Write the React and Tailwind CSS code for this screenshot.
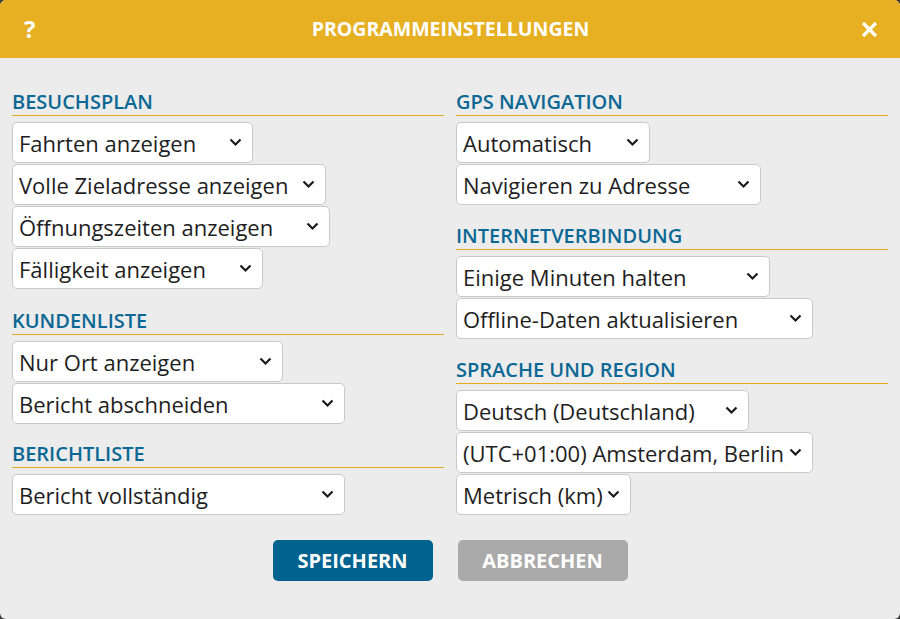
import { useState } from "react";

const font = { fontFamily: '"Open Sans", "Noto Sans", sans-serif' };

function Chevron() {
  return (
    <svg width="13" height="9" viewBox="0 0 13 9" className="shrink-0">
      <path d="M1.5 1.5 L6.5 6.5 L11.5 1.5" fill="none" stroke="#1a1a1a" strokeWidth="2.2" />
    </svg>
  );
}

function Select({ value, w }) {
  return (
    <div
      className={`flex items-center h-[41px] bg-white border border-[#c9c9c9] rounded-[5px] pl-[6px] pr-[10px] ${w}`}
    >
      <span className="flex-1 overflow-hidden whitespace-nowrap text-[22px] leading-[30px] text-[#1e1e1e]">{value}</span>
      <span className="pl-[4px]">
        <Chevron />
      </span>
    </div>
  );
}

function Section({ title, items, gap }) {
  return (
    <div className={gap}>
      <h3 className="text-[20px] leading-[26px] font-semibold text-[#0b6894] border-b border-[#e5ab1c] mb-[6px]">
        {title}
      </h3>
      <div className="flex flex-col gap-[1px]">
        {items.map((it) => (
          <Select key={it.v} value={it.v} w={it.w} />
        ))}
      </div>
    </div>
  );
}

export default function App() {
  const [open] = useState(true);

  const left = [
    {
      title: "BESUCHSPLAN",
      gap: "",
      items: [
        { v: "Fahrten anzeigen", w: "w-[241px]" },
        { v: "Volle Zieladresse anzeigen", w: "w-[314px]" },
        { v: "Öffnungszeiten anzeigen", w: "w-[318px]" },
        { v: "Fälligkeit anzeigen", w: "w-[251px]" },
      ],
    },
    {
      title: "KUNDENLISTE",
      gap: "mt-[19px]",
      items: [
        { v: "Nur Ort anzeigen", w: "w-[271px]" },
        { v: "Bericht abschneiden", w: "w-[333px]" },
      ],
    },
    {
      title: "BERICHTLISTE",
      gap: "mt-[17px]",
      items: [{ v: "Bericht vollständig", w: "w-[333px]" }],
    },
  ];

  const right = [
    {
      title: "GPS NAVIGATION",
      gap: "",
      items: [
        { v: "Automatisch", w: "w-[194px]" },
        { v: "Navigieren zu Adresse", w: "w-[305px]" },
      ],
    },
    {
      title: "INTERNETVERBINDUNG",
      gap: "mt-[18px]",
      items: [
        { v: "Einige Minuten halten", w: "w-[314px]" },
        { v: "Offline-Daten aktualisieren", w: "w-[357px]" },
      ],
    },
    {
      title: "SPRACHE UND REGION",
      gap: "mt-[18px]",
      items: [
        { v: "Deutsch (Deutschland)", w: "w-[293px]" },
        { v: "(UTC+01:00) Amsterdam, Berlin,", w: "w-[357px]" },
        { v: "Metrisch (km)", w: "w-[175px]" },
      ],
    },
  ];

  if (!open) return null;

  return (
    <div className="w-[900px] h-[619px] bg-[#3b3b3b]" style={font}>
      <div className="w-full h-full bg-[#ececec] rounded-[6px] overflow-hidden flex flex-col">
        {/* Title bar */}
        <div className="h-[58px] bg-[#e6b022] flex items-center pl-[24px] pr-[22px] text-white">
          <span className="w-[16px] text-[24px] leading-[30px] font-bold">?</span>
          <span className="flex-1 text-center text-[19.5px] font-bold">PROGRAMMEINSTELLUNGEN</span>
          <svg width="17" height="17" viewBox="0 0 17 17">
            <path d="M2 2 L15 15 M15 2 L2 15" stroke="#fff" strokeWidth="3.2" />
          </svg>
        </div>

        {/* Content */}
        <div className="flex gap-[12px] pl-[12px] pr-[12px] pt-[31px]">
          <div className="w-[432px]">
            {left.map((s) => (
              <Section key={s.title} title={s.title} items={s.items} gap={s.gap} />
            ))}
          </div>
          <div className="w-[432px]">
            {right.map((s) => (
              <Section key={s.title} title={s.title} items={s.items} gap={s.gap} />
            ))}
          </div>
        </div>

        {/* Buttons */}
        <div className="flex justify-center gap-[25px] mt-[25px]">
          <button className="w-[160px] h-[41px] rounded-[5px] bg-[#00628e] text-white text-[20px] font-bold">
            SPEICHERN
          </button>
          <button className="w-[170px] h-[41px] rounded-[5px] bg-[#aaaaaa] text-white text-[20px] font-bold">
            ABBRECHEN
          </button>
        </div>
      </div>
    </div>
  );
}
